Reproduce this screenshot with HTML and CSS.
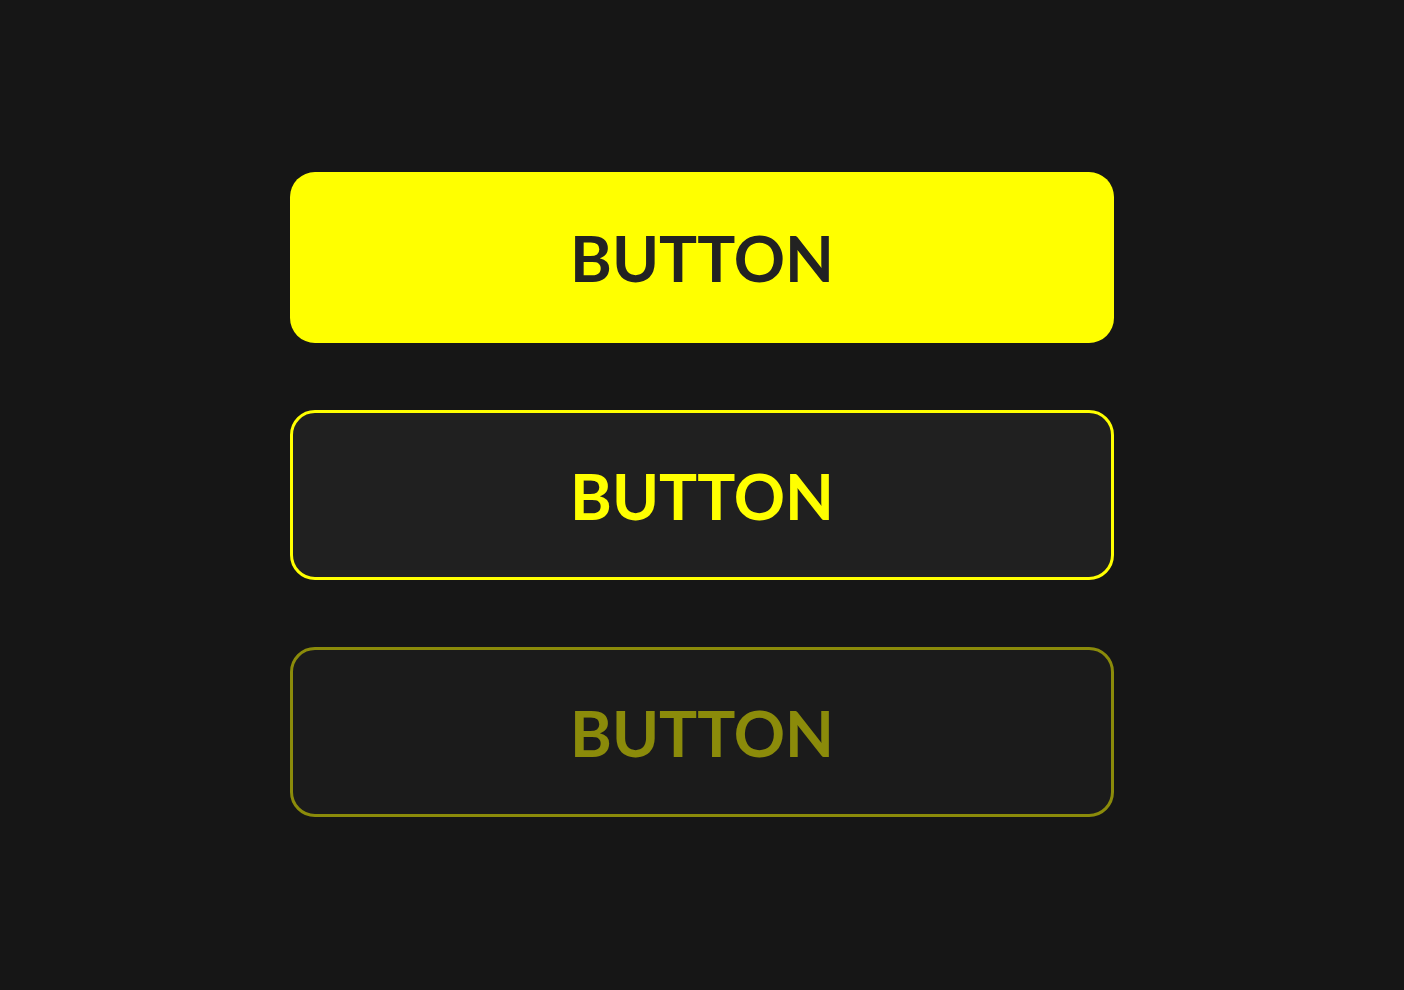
FILE: index.html
```html
<!DOCTYPE html>
<html lang="en">
<head>
    <meta charset="UTF-8">
    <meta name="viewport" content="width=device-width, initial-scale=1.0">
    <title>Buttons</title>
    <link rel="stylesheet" href="styles.css">
</head>
<body>
    <div class="button-list">
        <button class="btn btn-primary">BUTTON</button>
        <button class="btn btn-outline">BUTTON</button>
        <button class="btn btn-outline" disabled>BUTTON</button>
    </div>
</body>
</html>
```

FILE: styles.css
```css
body {
    margin: 0;
    padding-top: 172px;
    background-color: #161616;
    font-family: Lato, "Noto Sans", sans-serif;
    display: flex;
    justify-content: center;
}
.button-list {
    display: flex;
    flex-direction: column;
    gap: 67px;
    width: 824px;
}
.btn {
    height: 171px;
    border-radius: 25px;
    font-family: inherit;
    font-size: 63.5px;
    font-weight: 700;
    cursor: pointer;
    box-sizing: border-box;
}
.btn-primary {
    background-color: #ffff00;
    color: #222222;
    border: none;
}
.btn-outline {
    height: 170px;
    background-color: #202020;
    color: #ffff00;
    border: 3px solid #ffff00;
}
.btn-outline:disabled {
    opacity: 0.5;
    cursor: default;
}
```
